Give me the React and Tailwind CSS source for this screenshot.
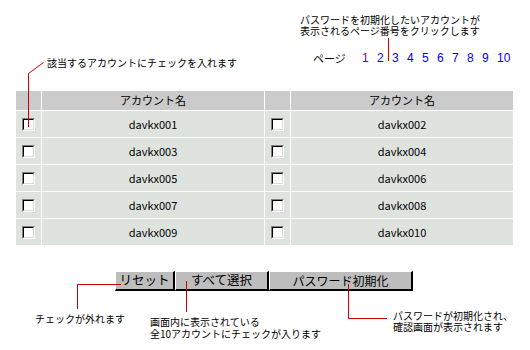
import React from "react";

const jp = { fontFamily: '"Noto Sans CJK JP", "Noto Sans", sans-serif' };

function Check() {
  return (
    <span className="flex w-[13px] h-[13px] border border-t-[#808080] border-l-[#808080] border-r-white border-b-white">
      <span className="flex-1 border border-t-black border-l-black border-r-[#dcdcdc] border-b-[#dcdcdc] bg-white" />
    </span>
  );
}

const rows = [
  ["davkx001", "davkx002"],
  ["davkx003", "davkx004"],
  ["davkx005", "davkx006"],
  ["davkx007", "davkx008"],
  ["davkx009", "davkx010"],
];

const pages = ["1", "2", "3", "4", "5", "6", "7", "8", "9", "10"];

export default function App() {
  return (
    <div className="relative w-[530px] h-[350px] bg-white text-black overflow-hidden" style={jp}>
      {/* top area */}
      <div className="h-[91px] flex flex-col">
        <div className="pl-[300px] pt-[14px] text-[10px] leading-[11px] whitespace-nowrap">
          <div>パスワードを初期化したいアカウントが</div>
          <div>表示されるページ番号をクリックします</div>
        </div>
        <div className="flex items-start">
          <div className="w-[313px] pl-[47px] pt-[21px] text-[10px] leading-[12px] whitespace-nowrap">
            該当するアカウントにチェックを入れます
          </div>
          <div className="flex items-center pt-[15px] h-[29px] leading-[14px]">
            <span className="w-[49px] text-[11px]">ページ</span>
            {pages.map((p, i) => (
              <span
                key={p}
                className={`w-[15px] text-[12px] ${i === 0 ? "text-[#800080]" : "text-[#0000ff]"}`}
                style={{ fontFamily: '"Liberation Sans", Arial, sans-serif' }}
              >
                {p}
              </span>
            ))}
          </div>
        </div>
      </div>

      {/* table */}
      <div className="ml-[16px] w-[497px] grid grid-cols-[25px_222px_25px_222px] gap-px">
        <div className="h-[19px] bg-[#cbcbcb]" />
        <div className="h-[19px] bg-[#cbcbcb] flex items-center justify-center text-[11px]">アカウント名</div>
        <div className="h-[19px] bg-[#cbcbcb]" />
        <div className="h-[19px] bg-[#cbcbcb] flex items-center justify-center text-[11px]">アカウント名</div>
        {rows.map(([a, b]) => (
          <React.Fragment key={a}>
            <div className="h-[26px] bg-[#dee3de] flex items-center justify-center">
              <Check />
            </div>
            <div className="h-[26px] bg-[#dee3de] flex items-center justify-center text-[11px]">{a}</div>
            <div className="h-[26px] bg-[#dee3de] flex items-center justify-center">
              <Check />
            </div>
            <div className="h-[26px] bg-[#dee3de] flex items-center justify-center text-[11px]">{b}</div>
          </React.Fragment>
        ))}
      </div>

      {/* buttons */}
      <div className="mt-[26px] ml-[115px] flex">
        <button className="w-[60px] h-[20px] flex items-center justify-center bg-[#bdbdbd] border-t border-l border-white border-r-2 border-b-2 border-r-black border-b-black text-[12.5px]">
          リセット
        </button>
        <button className="w-[94px] h-[20px] flex items-center justify-center bg-[#bdbdbd] border-t border-l border-white border-r-2 border-b-2 border-r-black border-b-black text-[12.5px]">
          すべて選択
        </button>
        <button className="w-[144px] h-[20px] flex items-center justify-center bg-[#bdbdbd] border-t border-l border-white border-r-2 border-b-2 border-r-black border-b-black text-[12px]">
          パスワード初期化
        </button>
      </div>

      {/* bottom notes */}
      <div className="grid grid-cols-[150px_243px_1fr] text-[10px] whitespace-nowrap">
        <div className="pl-[35px] pt-[22px] leading-[12px]">チェックが外れます</div>
        <div className="pt-[25px] leading-[12px]">
          <div>画面内に表示されている</div>
          <div>全10アカウントにチェックが入ります</div>
        </div>
        <div className="pt-[19px] leading-[11px]">
          <div>パスワードが初期化され、</div>
          <div>確認画面が表示されます</div>
        </div>
      </div>

      {/* callout lines */}
      <svg className="absolute inset-0 pointer-events-none" width="530" height="350" viewBox="0 0 530 350">
        <g fill="none" stroke="#cc0000" strokeWidth="1">
          <path d="M43.5 62.5 L28.5 73.5 L28.5 127" />
          <path d="M388.5 38 V61" />
          <path d="M121 284.5 H77.5 V309" />
          <path d="M186.5 281 V312" />
          <path d="M348.5 284 V318.5 H387" />
        </g>
      </svg>
    </div>
  );
}
